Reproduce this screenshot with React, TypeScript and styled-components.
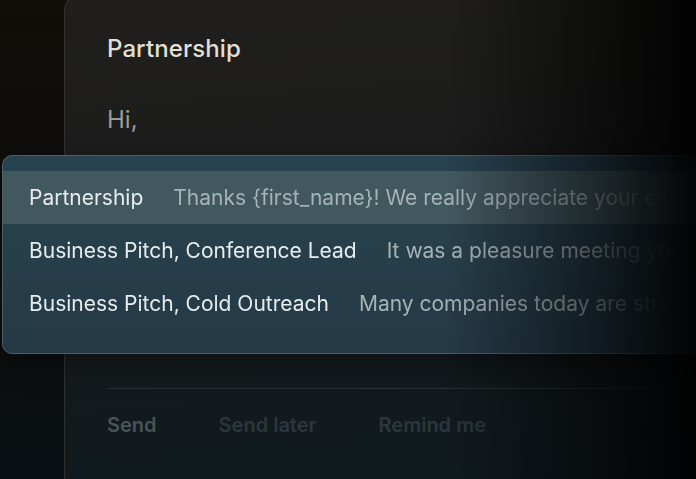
import React from 'react'
import styled, { createGlobalStyle } from 'styled-components'

const GlobalStyle = createGlobalStyle`
  html, body {
    margin: 0;
    padding: 0;
    background: #0c0b09;
    overflow: hidden;
  }
  * { box-sizing: border-box; }
`

const Stage = styled.div`
  position: relative;
  width: 696px;
  height: 479px;
  overflow: hidden;
  background: linear-gradient(180deg, #110d09 0%, #0d0e0e 55%, #0a1014 100%);
  font-family: Inter, 'Noto Sans', sans-serif;
  -webkit-font-smoothing: antialiased;
`

// dark falloff on the right side of the shot
const Vignette = styled.div`
  position: absolute;
  inset: 0;
  pointer-events: none;
  background: linear-gradient(90deg, rgba(0,0,0,0) 0%, rgba(0,0,0,0) 64%, rgba(0,0,0,0.55) 86%, rgba(0,0,0,0.95) 100%);
  z-index: 3;
`

const Composer = styled.section`
  margin: -6px 0 0 64px;
  width: 700px;
  height: 500px;
  border: 1px solid #35322e;
  border-radius: 16px;
  background: linear-gradient(175deg, #201f1d 0%, #1b1c1c 40%, #141a1d 70%, #0f1a20 100%);
  padding: 40px 0 0 42px;
  display: flex;
  flex-direction: column;
`

const Subject = styled.h1`
  margin: 0;
  font-size: 24px;
  line-height: 28px;
  font-weight: 500;
  color: #e2dfd8;
  letter-spacing: 0.1px;
`

const Greeting = styled.p`
  margin: 43px 0 0;
  font-size: 24px;
  line-height: 28px;
  font-weight: 400;
  color: #9c9b98;
`

const Divider = styled.hr`
  margin: 254px 0 0;
  border: 0;
  border-top: 1px solid #283034;
  width: 100%;
`

const Actions = styled.div`
  display: flex;
  gap: 62px;
  padding-top: 23px;
`

const Action = styled.button<{ $primary?: boolean }>`
  border: 0;
  background: none;
  padding: 0;
  font: inherit;
  font-size: 20px;
  line-height: 26px;
  font-weight: 600;
  color: ${p => (p.$primary ? '#4a5358' : '#2c373d')};
`

const Popup = styled.div`
  position: absolute;
  left: 2px;
  top: 155px;
  width: 720px;
  height: 199px;
  border: 1px solid #4e5f66;
  border-radius: 10px;
  background: linear-gradient(180deg, #284250 0%, #273f4a 50%, #243946 100%);
  padding: 15px 0 0;
  box-shadow: 0 10px 30px rgba(0,0,0,0.4);
  z-index: 2;
`

const Row = styled.div<{ $active?: boolean }>`
  height: 53px;
  display: flex;
  align-items: center;
  padding-left: 26px;
  background: ${p => (p.$active ? '#42585f' : 'transparent')};
`

const RowText = styled.div`
  display: flex;
  align-items: center;
  gap: 30px;
  white-space: nowrap;
  width: 670px;
  overflow: hidden;
  -webkit-mask-image: linear-gradient(90deg, #000 0, #000 550px, rgba(0,0,0,0.25) 625px, transparent 655px);
  mask-image: linear-gradient(90deg, #000 0, #000 550px, rgba(0,0,0,0.25) 625px, transparent 655px);
`

const TemplateName = styled.span`
  font-size: 21px;
  line-height: 26px;
  color: #e7ecec;
`

const Preview = styled.span`
  font-size: 21px;
  line-height: 26px;
  color: #a6b3b6;
`

const templates = [
  { name: 'Partnership', preview: 'Thanks {first_name}! We really appreciate your enthusiasm' },
  { name: 'Business Pitch, Conference Lead', preview: 'It was a pleasure meeting you at the conference' },
  { name: 'Business Pitch, Cold Outreach', preview: 'Many companies today are struggling with' },
]

export default function App() {
  return (
    <>
      <GlobalStyle />
      <Stage>
        <Composer>
          <Subject>Partnership</Subject>
          <Greeting>Hi,</Greeting>
          <Divider />
          <Actions>
            <Action $primary>Send</Action>
            <Action>Send later</Action>
            <Action>Remind me</Action>
          </Actions>
        </Composer>
        <Popup>
          {templates.map((t, i) => (
            <Row key={t.name} $active={i === 0}>
              <RowText>
                <TemplateName>{t.name}</TemplateName>
                <Preview>{t.preview}</Preview>
              </RowText>
            </Row>
          ))}
        </Popup>
        <Vignette />
      </Stage>
    </>
  )
}
